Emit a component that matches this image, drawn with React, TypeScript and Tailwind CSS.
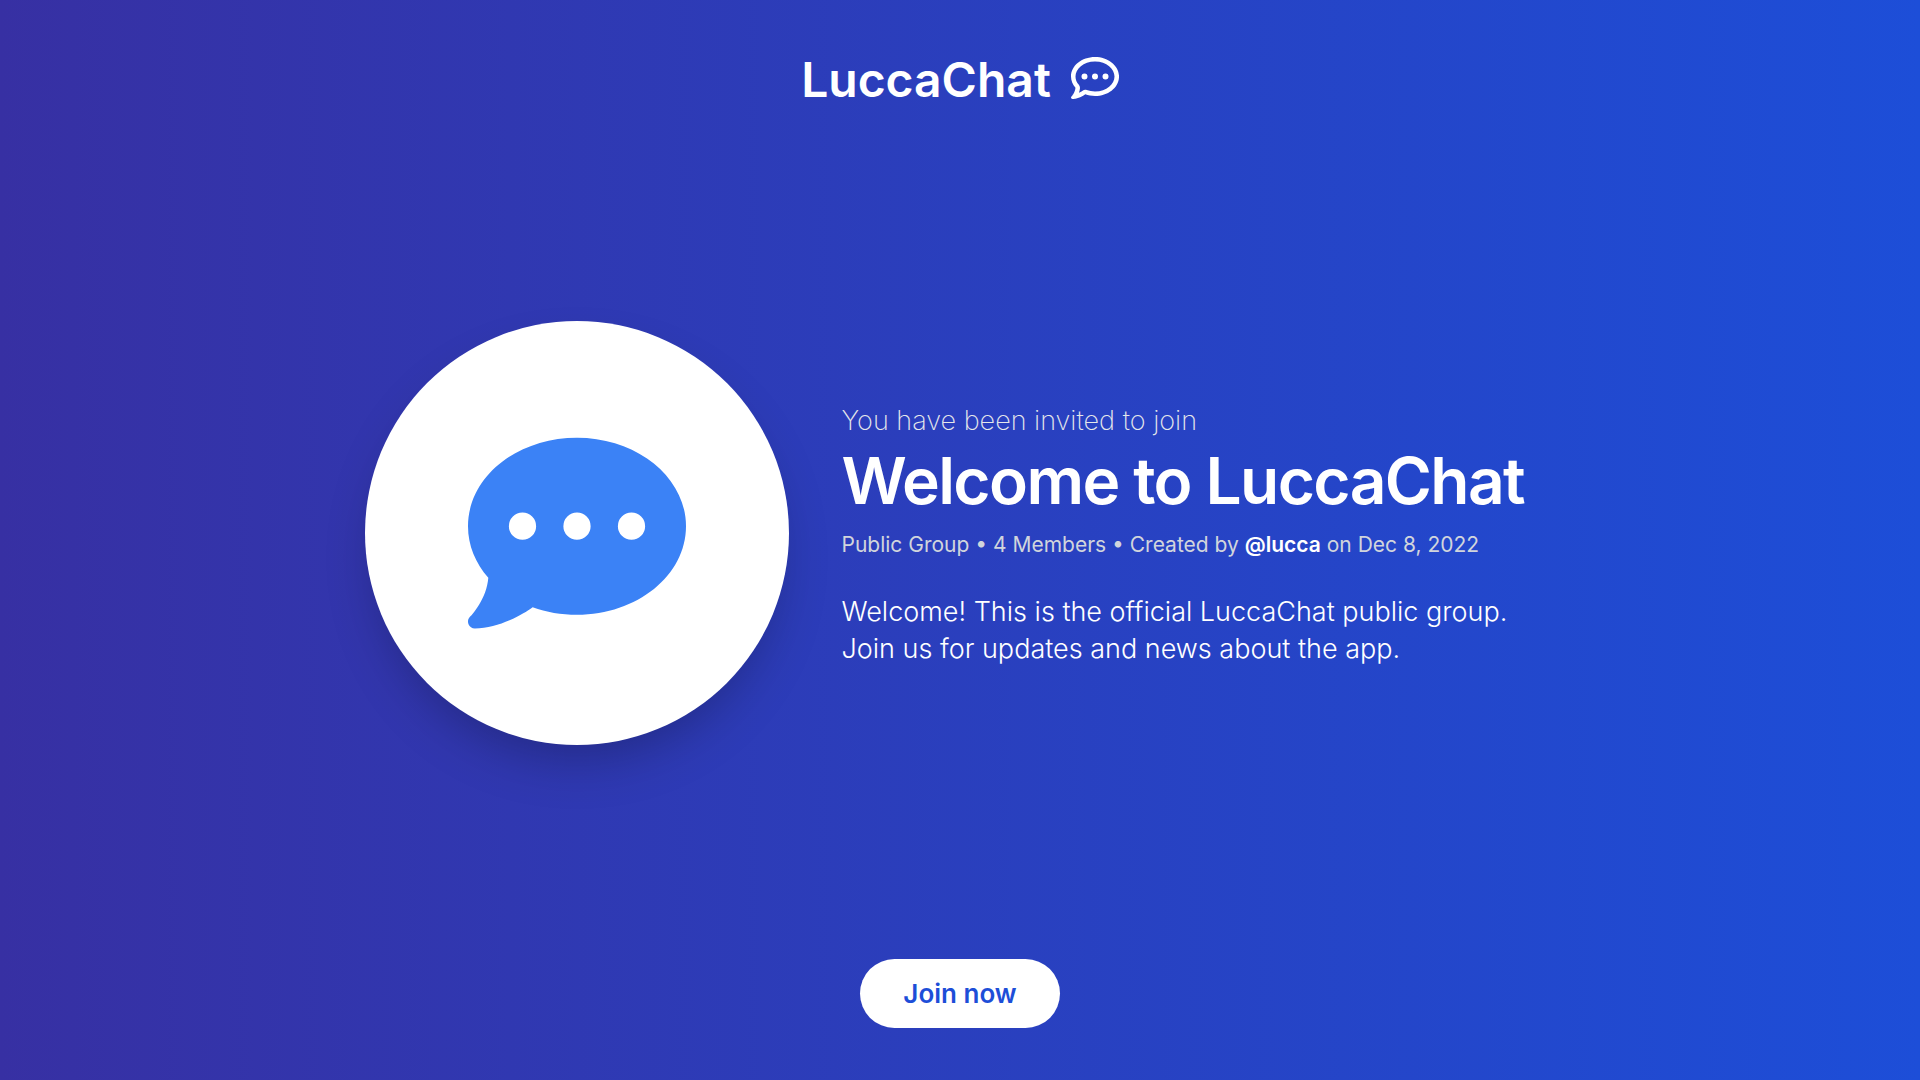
import React from "react";
import { FaRegCommentDots, FaCommentDots } from "react-icons/fa6";

export default function App() {
  return (
    <div className="flex min-h-screen flex-col items-center justify-between bg-linear-to-r/srgb from-[#3730a3] to-[#1d4ed8] px-8 py-[52px] font-[Inter,sans-serif] text-white">
      <header className="flex items-start gap-5">
        <span className="text-5xl leading-[55px] font-semibold">LuccaChat</span>
        <FaRegCommentDots className="mt-0.5 size-12" aria-hidden="true" />
      </header>
      <main className="flex items-center gap-[53px]">
        <div className="flex size-[424px] shrink-0 items-center justify-center rounded-full bg-white shadow-2xl">
          <FaCommentDots className="size-[218px] text-[#3b82f6]" aria-hidden="true" />
        </div>
        <div className="flex w-[714px] flex-col pt-0.5">
          <p className="text-[27px] leading-10 font-extralight text-gray-200">You have been invited to join</p>
          <h1 className="mt-1 text-[64px] leading-[72px] font-semibold tracking-tight">Welcome to LuccaChat</h1>
          <p className="mt-3 text-[21px] leading-8 text-gray-300">
            Public Group • 4 Members • Created by <a href="#lucca" className="font-semibold text-white">@lucca</a> on Dec 8, 2022
          </p>
          <p className="mt-8 text-[27px] leading-[37px] font-light text-white">
            Welcome! This is the official LuccaChat public group.
            <br />
            Join us for updates and news about the app.
          </p>
        </div>
      </main>
      <button type="button" className="rounded-full bg-white px-[43px] py-4 text-[26px] leading-[37px] font-semibold text-[#1d4ed8]">
        Join now
      </button>
    </div>
  );
}
